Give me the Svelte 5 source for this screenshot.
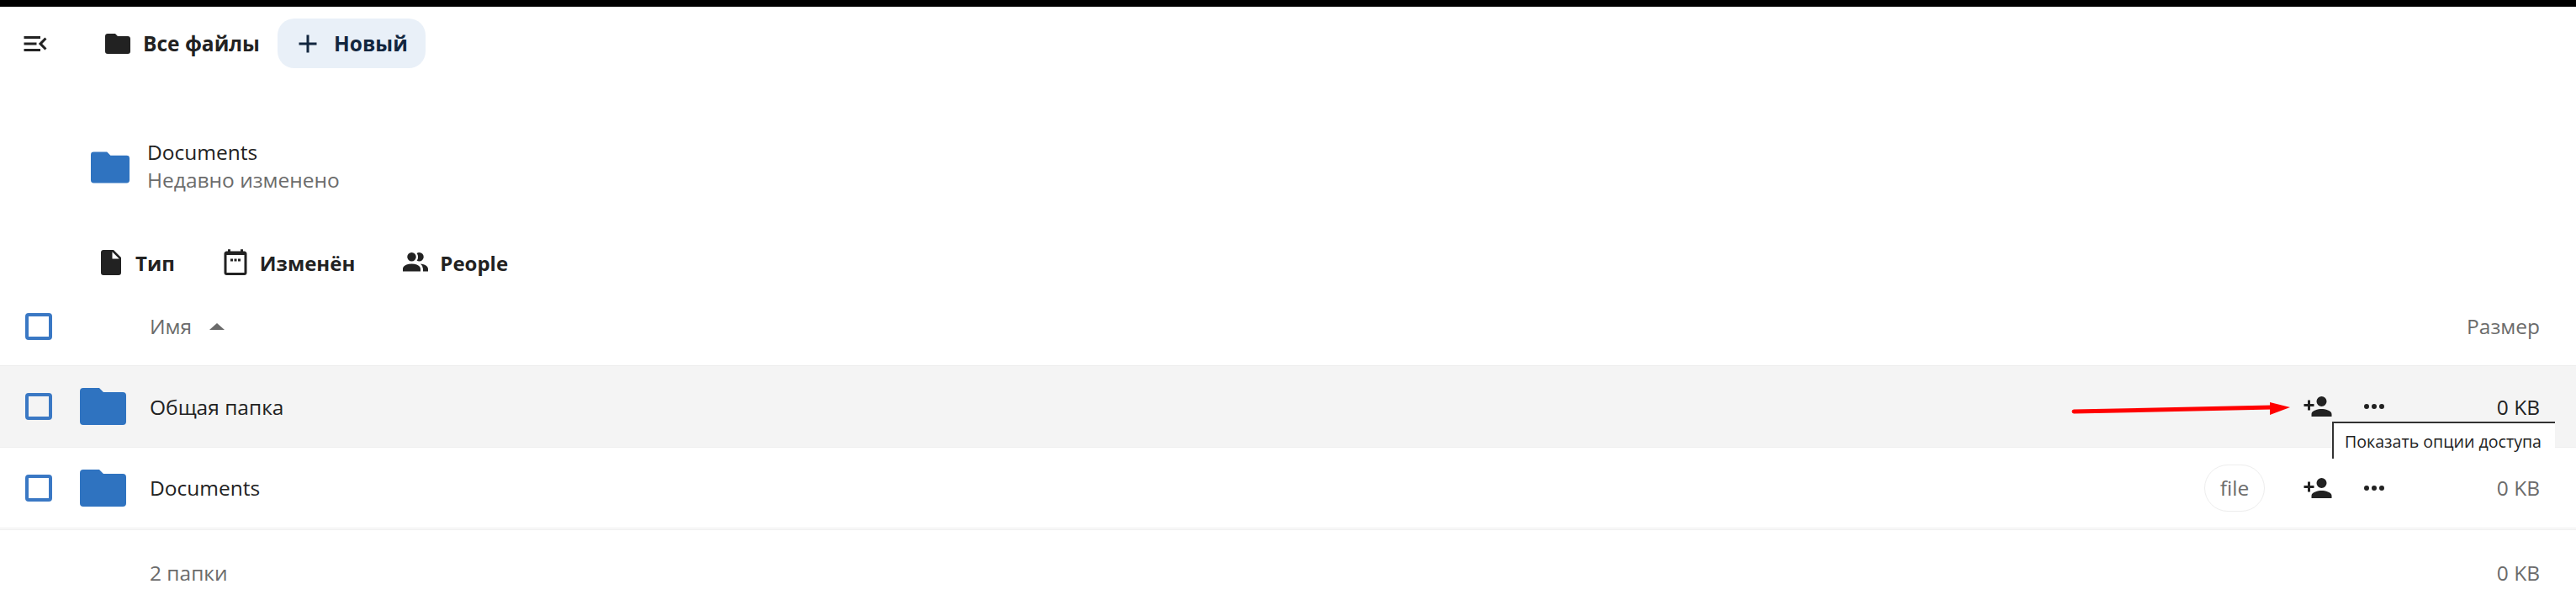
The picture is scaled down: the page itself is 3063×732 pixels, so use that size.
<script>
	const icons = {
		menu: 'M21,15.61L19.59,17L14.58,12L19.59,7L21,8.39L17.44,12L21,15.61M3,6H16V8H3V6M3,13V11H13V13H3M3,18V16H16V18H3Z',
		folder: 'M10,4H4C2.89,4 2,4.89 2,6V18A2,2 0 0,0 4,20H20A2,2 0 0,0 22,18V8C22,6.89 21.1,6 20,6H12L10,4Z',
		plus: 'M19,13H13V19H11V13H5V11H11V5H13V11H19V13Z',
		file: 'M13,9V3.5L18.5,9M6,2C4.89,2 4,2.89 4,4V20A2,2 0 0,0 6,22H18A2,2 0 0,0 20,20V8L14,2H6Z',
		calendar: 'M6,1.5V3H5C3.9,3 3,3.9 3,5V20A2,2 0 0,0 5,22H19A2,2 0 0,0 21,20V5C21,3.9 20.1,3 19,3H18V1.5H16V3H8V1.5H6M5,6H19V20H5V6M8,9V11H10V9H8M11,9V11H13V9H11M14,9V11H16V9H14Z',
		people: 'M16 17V19H2V17S2 13 9 13 16 17 16 17M12.5 7.5A3.5 3.5 0 1 0 9 11A3.5 3.5 0 0 0 12.5 7.5M15.94 13A5.32 5.32 0 0 1 18 17V19H22V17S22 13.37 15.94 13M15 4A3.39 3.39 0 0 0 13.07 4.59A5 5 0 0 1 13.07 10.41A3.39 3.39 0 0 0 15 11A3.5 3.5 0 0 0 15 4Z',
		share: 'M15,14C12.33,14 7,15.33 7,18V20H23V18C23,15.33 17.67,14 15,14M6,10V7H4V10H1V12H4V15H6V12H9V10M15,12A4,4 0 0,0 19,8A4,4 0 0,0 15,4A4,4 0 0,0 11,8A4,4 0 0,0 15,12Z',
		dots: 'M16,12A2,2 0 0,1 18,10A2,2 0 0,1 20,12A2,2 0 0,1 18,14A2,2 0 0,1 16,12M10,12A2,2 0 0,1 12,10A2,2 0 0,1 14,12A2,2 0 0,1 12,14A2,2 0 0,1 10,12M4,12A2,2 0 0,1 6,10A2,2 0 0,1 8,12A2,2 0 0,1 6,14A2,2 0 0,1 4,12Z'
	};
	const folderPath = 'M4 0h19l5 5h23a4 4 0 0 1 4 4v31a4 4 0 0 1-4 4H4a4 4 0 0 1-4-4V4a4 4 0 0 1 4-4z';
	const filters = [
		{ icon: 'file', label: 'Тип' },
		{ icon: 'calendar', label: 'Изменён' },
		{ icon: 'people', label: 'People' }
	];
	const rows = [
		{ name: 'Общая папка', size: '0 KB', active: true },
		{ name: 'Documents', size: '0 KB', tag: 'file' }
	];
</script>

<div class="page">
	<header class="topbar">
		<svg class="icon" viewBox="0 0 24 24"><path d={icons.menu} /></svg>
		<div class="crumb">
			<svg class="icon" viewBox="0 0 24 24"><path d={icons.folder} /></svg>
			<span>Все файлы</span>
		</div>
		<button class="new-btn">
			<svg class="icon" viewBox="0 0 24 24"><path d={icons.plus} /></svg>
			<span>Новый</span>
		</button>
	</header>

	<section class="recent">
		<svg class="folder small" viewBox="0 0 55 44"><path d={folderPath} /></svg>
		<div class="recent-text">
			<div class="recent-name">Documents</div>
			<div class="recent-sub">Недавно изменено</div>
		</div>
	</section>

	<nav class="filters">
		{#each filters as f (f.label)}
			<div class="filter">
				<svg class="icon" viewBox="0 0 24 24"><path d={icons[f.icon]} /></svg>
				<span>{f.label}</span>
			</div>
		{/each}
	</nav>

	<div class="table-head">
		<div class="checkbox"></div>
		<span class="col-name">Имя</span>
		<span class="sort"></span>
		<span class="col-size">Размер</span>
	</div>

	{#each rows as row (row.name)}
		<div class="row" class:active={row.active}>
			<div class="checkbox"></div>
			<svg class="folder" viewBox="0 0 55 44"><path d={folderPath} /></svg>
			<span class="name">{row.name}</span>
			{#if row.tag}
				<span class="tag">{row.tag}</span>
			{/if}
			<svg class="icon share" viewBox="0 0 24 24"><path d={icons.share} /></svg>
			<svg class="icon dots" viewBox="0 0 24 24"><path d={icons.dots} /></svg>
			<span class="size">{row.size}</span>
			{#if row.active}
				<svg class="arrow" width="270" height="24" viewBox="0 0 270 24">
					<path d="M3 16 L238 11" stroke="#f00" stroke-width="5" stroke-linecap="round" fill="none" />
					<path d="M236 5 L260 11 L236 20 Z" fill="#f00" />
				</svg>
				<div class="tooltip">Показать опции доступа</div>
			{/if}
		</div>
	{/each}

	<div class="summary">
		<span class="count">2 папки</span>
		<span class="total">0 KB</span>
	</div>
</div>

<style>
	:global(body) {
		margin: 0;
		background: #fff;
	}

	.page {
		width: 3063px;
		height: 732px;
		box-sizing: border-box;
		overflow: hidden;
		border-top: 8px solid #000;
		font-family: 'Open Sans', 'Noto Sans', sans-serif;
		font-size: 24.5px;
		color: #222;
		white-space: nowrap;
	}

	.icon {
		width: 36px;
		height: 36px;
		flex: none;
		fill: #222;
	}

	.topbar {
		display: flex;
		align-items: center;
		height: 59px;
		margin-top: 14px;
		padding-left: 24px;
	}

	.crumb {
		display: flex;
		align-items: center;
		gap: 12px;
		width: 186px;
		margin-left: 62px;
		font-weight: 700;
	}

	.new-btn {
		display: flex;
		align-items: center;
		gap: 13px;
		width: 176px;
		height: 59px;
		margin-left: 22px;
		padding: 0 0 0 18px;
		border: none;
		border-radius: 20px;
		background: #e9f0f8;
		color: #12263f;
		font: inherit;
		font-weight: 700;
	}

	.new-btn .icon {
		fill: #12263f;
	}

	.recent {
		display: flex;
		align-items: center;
		gap: 21px;
		height: 66px;
		margin-top: 83px;
		padding-left: 108px;
	}

	.folder {
		width: 55px;
		height: 44px;
		flex: none;
		fill: #2f73c0;
	}

	.folder.small {
		width: 46px;
		height: 38px;
		margin-top: 3px;
	}

	.recent-text {
		display: flex;
		flex-direction: column;
		line-height: 33px;
	}

	.recent-sub {
		color: #6b6b6b;
	}

	.filters {
		display: flex;
		align-items: center;
		height: 44px;
		margin-top: 60px;
		padding-left: 114px;
		font-size: 24px;
		font-weight: 700;
	}

	.filter {
		display: flex;
		align-items: center;
		gap: 11px;
		margin-right: 54px;
	}

	.table-head {
		display: flex;
		align-items: center;
		height: 94px;
		margin-top: 7px;
		padding-left: 30px;
		padding-right: 43px;
		border-bottom: 1px solid #ededed;
		box-sizing: border-box;
		color: #6b6b6b;
	}

	.col-name {
		margin-left: 116px;
	}

	.sort {
		width: 0;
		height: 0;
		margin-left: 21px;
		border-left: 9px solid transparent;
		border-right: 9px solid transparent;
		border-bottom: 8px solid #6b6b6b;
	}

	.col-size {
		margin-left: auto;
	}

	.checkbox {
		width: 32px;
		height: 32px;
		flex: none;
		box-sizing: border-box;
		border: 4px solid #3a78c4;
		border-radius: 4px;
	}

	.row {
		position: relative;
		display: flex;
		align-items: center;
		height: 97px;
		box-sizing: border-box;
		padding-left: 30px;
		border-bottom: 1px solid #ededed;
	}

	.row + .row {
		height: 96px;
	}

	.row.active {
		background: #f4f4f4;
	}

	.row .folder {
		margin-left: 33px;
	}

	.name {
		margin-left: 28px;
	}

	.tag {
		display: flex;
		align-items: center;
		justify-content: center;
		width: 72px;
		height: 56px;
		box-sizing: border-box;
		margin-left: auto;
		margin-right: 45px;
		border: 1px solid #ededed;
		border-radius: 28px;
		color: #6b6b6b;
	}

	.share {
		margin-left: auto;
	}

	.tag + .share {
		margin-left: 0;
	}

	.dots {
		margin-left: 31px;
	}

	.size {
		width: 179px;
		margin-right: 43px;
		text-align: right;
		color: #6b6b6b;
	}

	.active .size {
		color: #222;
	}

	.arrow {
		position: absolute;
		left: 2463px;
		top: 38px;
	}

	.tooltip {
		position: absolute;
		z-index: 1;
		left: 2773px;
		top: 66px;
		width: 265px;
		height: 44px;
		box-sizing: border-box;
		padding: 7px 0 0 13px;
		border-top: 2px solid #333;
		border-left: 2px solid #333;
		background: #fff;
		font-size: 19.6px;
		line-height: 30px;
	}

	.summary {
		display: flex;
		align-items: center;
		height: 102px;
		border-top: 1px solid #ededed;
		margin-top: 1px;
		box-sizing: border-box;
		padding: 0 43px 0 178px;
		color: #6b6b6b;
	}

	.total {
		margin-left: auto;
	}
</style>
